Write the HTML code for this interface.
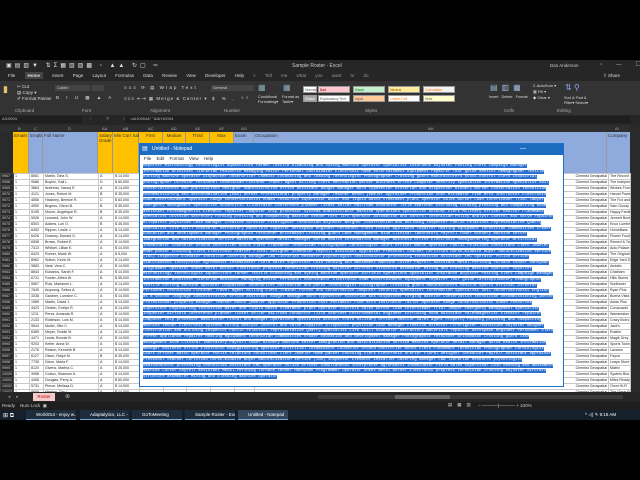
<!DOCTYPE html>
<html><head><meta charset="utf-8">
<style>
*{margin:0;padding:0;box-sizing:border-box}
body{width:640px;height:480px;background:#000;position:relative;overflow:hidden;font-family:"Liberation Sans",sans-serif;color:#ddd}
.a{position:absolute}
.t{font-size:4.5px;white-space:nowrap}
#title{left:0;top:60px;width:640px;height:12px;background:#262626}
#tabs{left:0;top:72px;width:640px;height:9px;background:#262626}
#ribbon{left:0;top:81px;width:640px;height:34px;background:#333}
#fbar{left:0;top:115px;width:640px;height:10px;background:#262626}
#colh{left:0;top:125px;width:640px;height:7px;background:#2e2e2e}
.sty{position:absolute;height:7px;width:32px;font-size:3.5px;color:#555;padding:1px;border:1px solid #999;white-space:nowrap;overflow:hidden}
table{border-collapse:collapse;table-layout:fixed}
td{height:5.6px;font-size:3.6px;border:0.5px solid #c8c8c8;background:#fff;color:#222;overflow:hidden;white-space:nowrap;padding:0 1px;line-height:5px}
td.r{background:#2a2a2a;color:#ccc;border-color:#444}
#np{left:139px;top:143px;width:425px;height:244px;background:#fff;border:1px solid #1a73c8}
#npt{left:0;top:0;width:423px;height:11px;background:#1c6dc2;color:#fff;font-size:5px;line-height:11px;padding-left:12px}
#npm{left:0;top:11px;width:423px;height:8px;background:#fff;color:#222;font-size:4.5px;line-height:8px;padding-left:4px;word-spacing:4px}
#npx{left:3px;top:20px;width:412px;height:221px;overflow:hidden;font-family:"Liberation Mono",monospace;font-size:4px;line-height:5.7px;color:#fff}
#npx span{background:#2b6fd0}
#tb{left:0;top:410px;width:640px;height:10px;background:#15202c}
.tk{position:absolute;top:410px;height:10px;font-size:4.5px;color:#fff;line-height:10px;padding-left:10px;background:#1e2d3d;border-bottom:1px solid #7aa7d6;white-space:nowrap;overflow:hidden}
</style></head><body>
<div id="title" class="a"><span class="a t" style="left:292px;top:3px;font-size:5px;color:#ccc">Sample Roster - Excel</span><span class="a t" style="left:550px;top:3px;color:#ccc">Dan Anderson</span>
<span class="a t" style="left:6px;top:2px;font-size:6px;color:#ddd;letter-spacing:3px">▣▤▥▼ ⇅Σ▦▧▨▩ ▫ ▲▲ ↻▢ ═</span><span class="a t" style="left:600px;top:1px;font-size:6px;color:#aaa;letter-spacing:6px">▫ — ☐ ✕</span></div>
<div id="tabs" class="a"><span class="a t" style="left:8px;top:1px;color:#ddd;word-spacing:8px">File <b style="background:#444;padding:1px 3px">Home</b> Insert Page&nbsp;Layout Formulas Data Review View Developer Help <span style="color:#999">⌕&nbsp;Tell&nbsp;me&nbsp;what&nbsp;you&nbsp;want&nbsp;to&nbsp;do</span></span><span class="a t" style="left:603px;top:1px">⇧ Share</span></div>
<div id="ribbon" class="a">
<span class="a t" style="left:3px;top:3px;font-size:9px;color:#e8c070">▮</span><span class="a t" style="left:17px;top:3px;line-height:6px">✂ Cut<br>▤ Copy ▾<br>✐ Format Painter</span>
<span class="a t" style="left:15px;top:27px;color:#aaa">Clipboard</span>
<div class="a" style="left:55px;top:4px;width:35px;height:6px;background:#444;font-size:4px;color:#ccc;padding-left:2px">Calibri</div><div class="a" style="left:92px;top:4px;width:12px;height:6px;background:#444"></div>
<span class="a t" style="left:56px;top:14px;letter-spacing:3px">B I U ▦ ▲ A</span><span class="a t" style="left:82px;top:27px;color:#aaa">Font</span>
<span class="a t" style="left:124px;top:4px;letter-spacing:2px">≡≡≡ ⟳ ▤ Wrap Text</span><span class="a t" style="left:124px;top:15px;letter-spacing:1px">≡≡≡ ⇤⇥ ▦ Merge &amp; Center ▾</span><span class="a t" style="left:150px;top:27px;color:#aaa">Alignment</span>
<div class="a" style="left:211px;top:4px;width:43px;height:6px;background:#444;font-size:4px;color:#ccc;padding-left:2px">General</div><span class="a t" style="left:212px;top:15px;letter-spacing:3px">$ % , ⁰⁰</span><span class="a t" style="left:224px;top:27px;color:#aaa">Number</span>
<span class="a t" style="left:258px;top:2px;font-size:8px;color:#8ab">▦</span><span class="a t" style="left:283px;top:2px;font-size:8px;color:#8ab">▦</span><span class="a t" style="left:258px;top:14px;font-size:3.8px;line-height:5px">Conditional<br>Formatting▾</span><span class="a t" style="left:282px;top:14px;font-size:3.8px;line-height:5px">Format as<br>Table▾</span>
<div class="sty" style="left:303px;top:5px;background:#fff;width:14px">Normal</div><div class="sty" style="left:303px;top:14px;background:#a5a5a5;width:14px;color:#fff">Check</div>
<div class="sty" style="left:318px;top:5px;background:#ffc7ce;color:#9c0006">Bad</div><div class="sty" style="left:318px;top:14px;background:#fff">Explanatory Text</div>
<div class="sty" style="left:353px;top:5px;background:#c6efce;color:#006100">Good</div><div class="sty" style="left:353px;top:14px;background:#ffcc99;color:#3f3f76">Input</div>
<div class="sty" style="left:388px;top:5px;background:#ffeb9c;color:#9c5700">Neutral</div><div class="sty" style="left:388px;top:14px;background:#fff;color:#fa7d00">Linked Cell</div>
<div class="sty" style="left:423px;top:5px;background:#f2f2f2;color:#fa7d00">Calculation</div><div class="sty" style="left:423px;top:14px;background:#ffffcc">Note</div>
<span class="a t" style="left:365px;top:27px;color:#aaa">Styles</span>
<span class="a t" style="left:490px;top:2px;font-size:8px;color:#9bd;letter-spacing:4px">▤▥▦</span><span class="a t" style="left:489px;top:14px;font-size:3.8px;word-spacing:2px">Insert Delete Format</span><span class="a t" style="left:504px;top:27px;color:#aaa">Cells</span>
<span class="a t" style="left:533px;top:2px;line-height:6px;font-size:4px">Σ AutoSum ▾<br>▦ Fill ▾<br>◆ Clear ▾</span><span class="a t" style="left:565px;top:2px;font-size:8px;color:#8ae">⇅ ⚲</span><span class="a t" style="left:564px;top:15px;font-size:3.8px;line-height:5px">Sort &amp; Find &amp;<br>Filter▾ Select▾</span><span class="a t" style="left:557px;top:27px;color:#aaa">Editing</span>
</div>
<div id="fbar" class="a"><div class="a" style="left:0;top:1px;width:82px;height:7px;background:#1e1e1e;font-size:4px;color:#bbb;padding-left:2px">AI10004</div><span class="a t" style="left:88px;top:1px;color:#888;letter-spacing:6px">⋮ ✕ ✓ fx</span><div class="a" style="left:125px;top:1px;width:505px;height:7px;background:#1e1e1e;font-size:4px;color:#bbb;padding-left:5px">=AI10004&amp;" "&amp;AH10004</div></div>
<div id="colh" class="a"><span class="a t" style="left:0;top:1px;font-size:4px;color:#aaa">
<span class="a" style="left:18px">B</span><span class="a" style="left:34px">C</span><span class="a" style="left:68px">D</span><span class="a" style="left:102px">AA</span><span class="a" style="left:123px">AB</span><span class="a" style="left:148px">AC</span><span class="a" style="left:171px">AD</span><span class="a" style="left:195px">AE</span><span class="a" style="left:219px">AF</span><span class="a" style="left:241px">AG</span><span class="a" style="left:428px">AH</span><span class="a" style="left:615px">AI</span></span></div>
<div class="a" style="left:630px;top:125px;width:10px;height:267px;background:#2a2a2a"></div>
<div class="a" style="left:0;top:132px;width:13px;height:41px;background:#2a2a2a"></div>
<div class="a t" style="left:13px;top:132px;width:16px;height:41px;background:#ffc000;color:#333;border-right:1px solid #999;padding:1px">Emails</div>
<div class="a t" style="left:29px;top:132px;width:14px;height:41px;background:#8faadc;color:#333;border-right:1px solid #999;padding:1px">Emplid</div>
<div class="a t" style="left:43px;top:132px;width:55px;height:41px;background:#8faadc;color:#333;border-right:1px solid #999;padding:1px">Full Name</div>
<div class="a t" style="left:98px;top:132px;width:15px;height:41px;background:#ffc000;color:#333;border-right:1px solid #999;padding:1px;white-space:normal">Salary Grade</div>
<div class="a t" style="left:113px;top:132px;width:26px;height:41px;background:#ffc000;color:#333;border-right:1px solid #999;padding:1px">Min Curr Sal</div>
<div class="a t" style="left:139px;top:132px;width:24px;height:41px;background:#ffc000;color:#333;border-right:1px solid #999;padding:1px;text-align:center">First</div>
<div class="a t" style="left:163px;top:132px;width:23px;height:41px;background:#ffc000;color:#333;border-right:1px solid #999;padding:1px;text-align:center">Median</div>
<div class="a t" style="left:186px;top:132px;width:24px;height:41px;background:#ffc000;color:#333;border-right:1px solid #999;padding:1px;text-align:center">Third</div>
<div class="a t" style="left:210px;top:132px;width:24px;height:41px;background:#ffc000;color:#333;border-right:1px solid #999;padding:1px;text-align:center">Max</div>
<div class="a t" style="left:234px;top:132px;width:20px;height:41px;background:#8faadc;color:#333;border-right:1px solid #999;padding:1px">Exam</div>
<div class="a t" style="left:254px;top:132px;width:353px;height:41px;background:#8faadc;color:#333;border-right:1px solid #999;padding:1px">Occupation</div>
<div class="a t" style="left:607px;top:132px;width:23px;height:41px;background:#8faadc;color:#333;padding:1px">Company</div>
<table class="a" style="left:0;top:173px;width:630px">
<colgroup><col style="width:13px"><col style="width:16px"><col style="width:14px"><col style="width:55px"><col style="width:15px"><col style="width:26px"><col style="width:24px"><col style="width:23px"><col style="width:24px"><col style="width:24px"><col style="width:20px"><col style="width:354px"><col style="width:22px"></colgroup>
<tr><td class="r">9967</td><td>1</td><td>8061</td><td>Martin, Dina S.</td><td>A</td><td>$ 14,000</td><td></td><td></td><td></td><td></td><td></td><td style="text-align:right">Chemist Geospatial</td><td>The Record St</td></tr>
<tr><td class="r">9968</td><td>1</td><td>9586</td><td>Boykin, Gail L.</td><td>D</td><td>$ 80,000</td><td></td><td></td><td></td><td></td><td></td><td style="text-align:right">Chemist Geospatial</td><td>The Independ</td></tr>
<tr><td class="r">9969</td><td>1</td><td>3864</td><td>Andrews, Nancy E.</td><td>A</td><td>$ 14,000</td><td></td><td></td><td></td><td></td><td></td><td style="text-align:right">Chemist Geospatial</td><td>Wickes Furn</td></tr>
<tr><td class="r">9970</td><td>1</td><td>4121</td><td>Jones, Robert M.</td><td>B</td><td>$ 35,000</td><td></td><td></td><td></td><td></td><td></td><td style="text-align:right">Chemist Geospatial</td><td>Harold Powe</td></tr>
<tr><td class="r">9971</td><td>1</td><td>4556</td><td>Hackney, Bernice R.</td><td>C</td><td>$ 63,000</td><td></td><td></td><td></td><td></td><td></td><td style="text-align:right">Chemist Geospatial</td><td>The Fox and</td></tr>
<tr><td class="r">9972</td><td>1</td><td>4950</td><td>Bugess, Glenn B.</td><td>B</td><td>$ 35,000</td><td></td><td></td><td></td><td></td><td></td><td style="text-align:right">Chemist Geospatial</td><td>Sam Goody</td></tr>
<tr><td class="r">9973</td><td>1</td><td>5195</td><td>Moore, Angelique R.</td><td>B</td><td>$ 35,000</td><td></td><td></td><td></td><td></td><td></td><td style="text-align:right">Chemist Geospatial</td><td>Happy Famil</td></tr>
<tr><td class="r">9974</td><td>1</td><td>5926</td><td>Leonard, John W.</td><td>A</td><td>$ 14,000</td><td></td><td></td><td></td><td></td><td></td><td style="text-align:right">Chemist Geospatial</td><td>Jennett Boot</td></tr>
<tr><td class="r">9975</td><td>1</td><td>6503</td><td>Adams, Lori O.</td><td>B</td><td>$ 35,000</td><td></td><td></td><td></td><td></td><td></td><td style="text-align:right">Chemist Geospatial</td><td>Knox Lumber</td></tr>
<tr><td class="r">9976</td><td>1</td><td>6452</td><td>Rippon, Leslie J.</td><td>A</td><td>$ 14,000</td><td></td><td></td><td></td><td></td><td></td><td style="text-align:right">Chemist Geospatial</td><td>HomeBase</td></tr>
<tr><td class="r">9977</td><td>1</td><td>6426</td><td>Downey, Donald O.</td><td>A</td><td>$ 14,000</td><td></td><td></td><td></td><td></td><td></td><td style="text-align:right">Chemist Geospatial</td><td>Flower Food</td></tr>
<tr><td class="r">9978</td><td>1</td><td>6598</td><td>Brown, Robert E.</td><td>A</td><td>$ 14,000</td><td></td><td></td><td></td><td></td><td></td><td style="text-align:right">Chemist Geospatial</td><td>Record &amp; Tap</td></tr>
<tr><td class="r">9979</td><td>1</td><td>7313</td><td>Whitsel, Lillian E.</td><td>A</td><td>$ 14,000</td><td></td><td></td><td></td><td></td><td></td><td style="text-align:right">Chemist Geospatial</td><td>Auto Palace</td></tr>
<tr><td class="r">9980</td><td>1</td><td>8429</td><td>Rohrer, Marie W.</td><td>A</td><td>$ 5,000</td><td></td><td></td><td></td><td></td><td></td><td style="text-align:right">Chemist Geospatial</td><td>The Original</td></tr>
<tr><td class="r">9981</td><td>1</td><td>8962</td><td>Sutton, Kevin M.</td><td>A</td><td>$ 14,000</td><td></td><td></td><td></td><td></td><td></td><td style="text-align:right">Chemist Geospatial</td><td>Edge Yard Se</td></tr>
<tr><td class="r">9982</td><td>1</td><td>9683</td><td>Neal, Vera C.</td><td>A</td><td>$ 14,000</td><td></td><td></td><td></td><td></td><td></td><td style="text-align:right">Chemist Geospatial</td><td>Amiatic</td></tr>
<tr><td class="r">9983</td><td>1</td><td>8844</td><td>Eubanks, Sarah F.</td><td>A</td><td>$ 14,000</td><td></td><td></td><td></td><td></td><td></td><td style="text-align:right">Chemist Geospatial</td><td>Chatham</td></tr>
<tr><td class="r">9984</td><td>1</td><td>6721</td><td>Fowler, Alfred W.</td><td>B</td><td>$ 35,000</td><td></td><td></td><td></td><td></td><td></td><td style="text-align:right">Chemist Geospatial</td><td>Hills Stores</td></tr>
<tr><td class="r">9985</td><td>1</td><td>5567</td><td>Ruiz, Marianne L.</td><td>A</td><td>$ 14,000</td><td></td><td></td><td></td><td></td><td></td><td style="text-align:right">Chemist Geospatial</td><td>Sunflower</td></tr>
<tr><td class="r">9986</td><td>1</td><td>7645</td><td>Auyoung, Selina A.</td><td>A</td><td>$ 14,000</td><td></td><td></td><td></td><td></td><td></td><td style="text-align:right">Chemist Geospatial</td><td>Ryan Plus</td></tr>
<tr><td class="r">9987</td><td>1</td><td>3338</td><td>Gardner, Lorraine C.</td><td>A</td><td>$ 14,000</td><td></td><td></td><td></td><td></td><td></td><td style="text-align:right">Chemist Geospatial</td><td>Buena Vista</td></tr>
<tr><td class="r">9988</td><td>1</td><td>1589</td><td>Martin, David J.</td><td>A</td><td>$ 14,000</td><td></td><td></td><td></td><td></td><td></td><td style="text-align:right">Chemist Geospatial</td><td>Asian Plus</td></tr>
<tr><td class="r">9989</td><td>1</td><td>4423</td><td>Oelsen, Evelyn R.</td><td>A</td><td>$ 14,000</td><td></td><td></td><td></td><td></td><td></td><td style="text-align:right">Chemist Geospatial</td><td>Compuadd</td></tr>
<tr><td class="r">9990</td><td>1</td><td>1211</td><td>Perez, Amanda R.</td><td>A</td><td>$ 14,000</td><td></td><td></td><td></td><td></td><td></td><td style="text-align:right">Chemist Geospatial</td><td>Wanamaker</td></tr>
<tr><td class="r">9991</td><td>1</td><td>2133</td><td>Robinson, Lois M.</td><td>A</td><td>$ 14,000</td><td></td><td></td><td></td><td></td><td></td><td style="text-align:right">Chemist Geospatial</td><td>Crazy Bob's</td></tr>
<tr><td class="r">9992</td><td>1</td><td>5544</td><td>Muller, Otto C.</td><td>A</td><td>$ 14,000</td><td></td><td></td><td></td><td></td><td></td><td style="text-align:right">Chemist Geospatial</td><td>Jack's</td></tr>
<tr><td class="r">9993</td><td>1</td><td>6389</td><td>Meyer, Teddie M.</td><td>A</td><td>$ 14,000</td><td></td><td></td><td></td><td></td><td></td><td style="text-align:right">Chemist Geospatial</td><td>Rustler</td></tr>
<tr><td class="r">9994</td><td>1</td><td>4471</td><td>Lewis, Bonnie B.</td><td>A</td><td>$ 14,000</td><td></td><td></td><td></td><td></td><td></td><td style="text-align:right">Chemist Geospatial</td><td>Magik Grey</td></tr>
<tr><td class="r">9995</td><td>1</td><td>9203</td><td>Keifer, Anna W.</td><td>A</td><td>$ 14,000</td><td></td><td></td><td></td><td></td><td></td><td style="text-align:right">Chemist Geospatial</td><td>Sports Town</td></tr>
<tr><td class="r">9996</td><td>1</td><td>2176</td><td>Reston, Kenneth B.</td><td>A</td><td>$ 14,000</td><td></td><td></td><td></td><td></td><td></td><td style="text-align:right">Chemist Geospatial</td><td>Lazarus</td></tr>
<tr><td class="r">9997</td><td>1</td><td>6127</td><td>Olson, Ralph M.</td><td>B</td><td>$ 35,000</td><td></td><td></td><td></td><td></td><td></td><td style="text-align:right">Chemist Geospatial</td><td>Fayva</td></tr>
<tr><td class="r">9998</td><td>1</td><td>7735</td><td>Dixon, Marla F.</td><td>A</td><td>$ 14,000</td><td></td><td></td><td></td><td></td><td></td><td style="text-align:right">Chemist Geospatial</td><td>Leaps Store</td></tr>
<tr><td class="r">9999</td><td>1</td><td>8120</td><td>Givens, Martha C.</td><td>A</td><td>$ 20,000</td><td></td><td></td><td></td><td></td><td></td><td style="text-align:right">Chemist Geospatial</td><td>Matrix</td></tr>
<tr><td class="r">10000</td><td>1</td><td>3956</td><td>Cotton, Shannon A.</td><td>A</td><td>$ 14,000</td><td></td><td></td><td></td><td></td><td></td><td style="text-align:right">Chemist Geospatial</td><td>System Bus</td></tr>
<tr><td class="r">10001</td><td>1</td><td>4408</td><td>Douglas, Perry A.</td><td>A</td><td>$ 60,000</td><td></td><td></td><td></td><td></td><td></td><td style="text-align:right">Chemist Geospatial</td><td>Miles Ready</td></tr>
<tr><td class="r">10002</td><td>1</td><td>5731</td><td>Pierce, Melissa D.</td><td>A</td><td>$ 14,000</td><td></td><td></td><td></td><td></td><td></td><td style="text-align:right">Chemist Geospatial</td><td>Omni Hi-Fi</td></tr>
<tr><td class="r">10003</td><td>1</td><td>8695</td><td>Higgins, Tim L.</td><td>A</td><td>$ 14,000</td><td></td><td></td><td></td><td></td><td></td><td style="text-align:right">Chemist Geospatial</td><td>The Great Fr</td></tr>
<tr><td class="r">10004</td><td>1</td><td>9053</td><td>Woodridge, Ollie J.</td><td>A</td><td>$ 20,000</td><td></td><td></td><td></td><td></td><td></td><td style="text-align:right">Chemist Geospatial</td><td>Gas Depot</td></tr>
</table>
<div id="np" class="a">
<div id="npt" class="a">Untitled - Notepad<span class="a" style="left:2px;top:0;font-size:6px">▤</span><span class="a" style="left:380px;top:0;letter-spacing:10px;font-size:6px">— ☐ ✕</span></div>
<div id="npm" class="a">File Edit Format View Help</div>
<div id="npx" class="a"><span>Reporter Microbiology technologist Aquaculture farmer Textile bleaching and dyeing machine operator Specialist insurance adjuster Posting clerk Campaign manager Information architect librarian Pediatric Managing editor Personnel coordinator Electronic home entertainment equipment repairer Tour guide dentist Demographer Textile cutting machine operator Dispatcher Underwriter Chemist Excavating and loading Technologist Photographer Crossing guard Manufacturers stock-control clerk Industrial photographer Director Personnel technician Finisher Travel agent Billing clerk Recreation worker Business office Computer security specialist Information specialist Soil conservationist Web publications designer Administrative office assistant Budget manager Word typesetter Historian Bus dispatcher Bindery worker Conservation technician Decommissioning and decontamination (D&amp;D) worker Professional property manager Teacher Bench jeweler Appraiser Production cost estimator Fine arts instructor Electronic home entertainment Operator Range conservationist Human resources supervisor Water and liquid waste treatment plant operator Sales worker Loan interviewer Trial lawyer Emergency management specialist Scientific illustrator Conference planner Ticket seller Railroad conductor Title searcher Extruding forming pressing and compacting Room assistant Paleomagnetist Elevator repairer Computer chip processor Systems administrator Machine Operations specialist Account clerk Military officer Realtor Placement specialist Division secretary Forming pressing and compacting machine tender Fork lift operator Automation and control technician Policy analyst Control and valve repairer Allopathic physician Cash manager Creative director Firefighter Technician Adjuster Weigher Construction and building inspector Public relations representative Quarry Specialist Life skill counselor Refractory materials repairer Aerospace engineer Personnel clerk Forest Appliance repairer Heating equipment technician Commodities trader Education and development manager Photographic retoucher Brickmason Crossing guard Case management aide Clinical laboratory Payroll tower Bindery machine setter Immigration and naturalization service Machine operator Retail manager Nurse Health information manager Business office Electronic newsgathering operator Artificial Inseminator Counselor Ground controller Bonus clerk Placement Technician Photographer Cardiologist Court officer Watch operator Public relations consultant Clerk Jeweler Home packer Encoding clerk Electronic drafter Floral designer Scheduler Payroll assistant Appraiser Preschool teacher Certified nurse-midwife Buyer Naturalization service (INS) inspector Elevator installer Catering manager Law librarian Research psychologist Semiconductor processing technician Assistant EMC operator Police officer Simultaneous interpreter Agronomist Inseminator Field sales supervisor Coin vending and amusement machine Cutter Payroll assistant Metal-refining furnace tender Handyman Programmer Operator Sheet metal worker Electronic prepress technician Crushing Adjuster Aircraft structure assembler Mixing and blending machine operator Reporter Microbiology technologist Aquaculture farmer Textile bleaching and dyeing machine operator Airfield operations Specialist insurance adjuster Posting clerk Campaign manager Information architect librarian Mediator Managing editor Personnel coordinator Electronic home entertainment equipment repairer Tour guide Cardiopulmonary Demographer Textile cutting machine operator Dispatcher Underwriter Recreation and parks Technologist Photographer Crossing guard Manufacturers vehicle sports official Director Personnel technician Finisher Travel agent Billing clerk Trainer Forest and conservation Computer security specialist Information specialist Soil conservationist English as a second language Administrative office assistant Budget manager Word typesetter Historian Bus dispatcher Forging machine Conservation technician Decommissioning worker Professional property manager Teacher Bench jeweler Appraiser Production cost estimator Fine arts instructor Tailor Operator Range conservationist Human resources supervisor Engineering technician Water and liquid waste treatment plant operator Controls Sales worker Loan interviewer Trial lawyer Emergency management specialist Inspector Airfield Conference planner Ticket seller Railroad conductor Title searcher Environmental engineer Extruding Room assistant Paleomagnetist Elevator repairer Computer chip processor Newsletter Fiscal and budget Operations specialist Account clerk Military officer Realtor Sales agent Property Forming pressing and compacting machine tender Electronic systems Policy analyst Control and valve repairer Allopathic physician Cash manager Creative director Firefighter Technician Adjuster Weigher Construction and building inspector Public relations representative Quarry Specialist Life skill counselor Refractory materials repairer Aerospace engineer Personnel clerk Forest Appliance repairer Heating equipment technician Commodities trader Education and development manager Photographic retoucher Brickmason Crossing guard Case management aide Clinical laboratory Payroll tower Bindery machine setter Immigration and naturalization service Machine operator Retail manager Nurse Health information manager Business office Electronic newsgathering operator Artificial Inseminator Counselor Ground controller Bonus clerk Placement Technician Photographer Cardiologist Court officer Watch operator Public relations consultant Clerk Jeweler Home packer Encoding clerk Electronic drafter Floral designer Scheduler Payroll assistant Appraiser Preschool teacher Certified nurse-midwife Buyer Naturalization service (INS) inspector Elevator installer Catering manager Law librarian Research psychologist Semiconductor processing technician Assistant EMC operator Police officer Simultaneous interpreter Agronomist Inseminator Field sales supervisor Coin vending and amusement machine Cutter Payroll assistant Metal-refining furnace tender Handyman Programmer Operator Sheet metal worker Electronic prepress technician Crushing Adjuster Aircraft structure assembler Mixing and blending machine operator</span></div>
</div>
<div class="a" style="left:0;top:392px;width:640px;height:10px;background:#262626"><span class="a t" style="left:8px;top:2px;color:#999;letter-spacing:6px">◂▸</span><div class="a t" style="left:33px;top:1px;width:22px;height:8px;background:#f4cccc;color:#c00;text-align:center;line-height:8px">Roster</div><span class="a t" style="left:65px;top:1px;font-size:6px;color:#aaa">⊕</span><div class="a" style="left:318px;top:3px;width:305px;height:4px;background:#3a3a3a"></div><div class="a" style="left:395px;top:3px;width:55px;height:4px;background:#666"></div></div>
<div class="a" style="left:0;top:402px;width:640px;height:8px;background:#1e1e1e"><span class="a t" style="left:2px;top:1px;color:#ccc">Ready&nbsp;&nbsp;&nbsp;&nbsp;Num Lock&nbsp;&nbsp;▣</span><span class="a t" style="left:448px;top:0px;color:#ccc;letter-spacing:5px">▤▦▥</span><span class="a t" style="left:478px;top:1px;color:#ccc">− ─────|───── + 100%</span></div>
<div id="tb" class="a"><span class="a t" style="left:3px;top:2px;font-size:6px;color:#fff">⊞ ⧉</span></div>
<div class="tk" style="left:26px;width:50px">WorldOut - enjoy w...</div>
<div class="tk" style="left:80px;width:49px">Adaptalytics, LLC - G...</div>
<div class="tk" style="left:132px;width:50px">GoToMeeting</div>
<div class="tk" style="left:185px;width:50px">Sample Roster - Excel</div>
<div class="tk" style="left:238px;width:50px;background:#33475c">Untitled - Notepad</div>
<span class="a t" style="left:585px;top:412px;color:#fff">^ ◁) ✎ 9:18 AM</span>
</body></html>
